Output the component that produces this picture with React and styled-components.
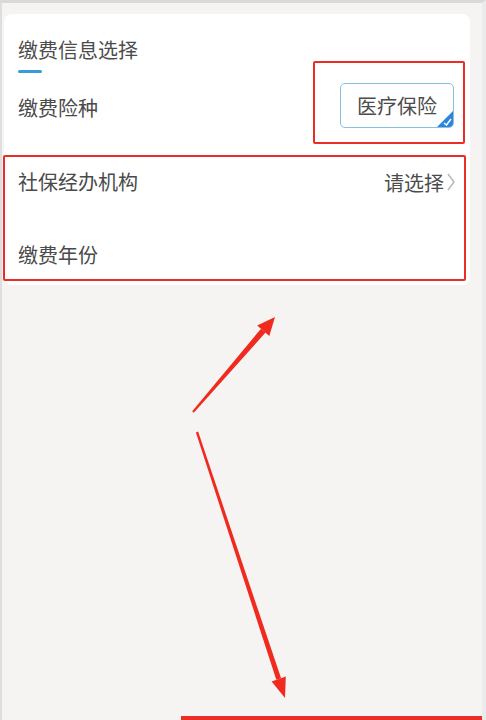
import React from 'react'
import styled, { createGlobalStyle } from 'styled-components'

const GlobalStyle = createGlobalStyle`
  html, body {
    margin: 0;
    padding: 0;
    background: #f5f4f3;
  }
  body {
    font-family: "Noto Sans CJK SC", "Noto Sans", sans-serif;
  }
`

const Page = styled.div`
  position: relative;
  box-sizing: border-box;
  width: 486px;
  height: 720px;
  overflow: hidden;
  background: #f5f4f3;
  border-top: 3px solid #d9d9d9;
  border-left: 2px solid #dedede;
  border-right: 4px solid #ebebeb;
`

const Card = styled.div`
  position: relative;
  display: flex;
  flex-direction: column;
  margin: 11px 12px 0 2px;
  height: 271px;
  background: #ffffff;
  border-radius: 8px;
`

const TitleBlock = styled.div`
  display: flex;
  flex-direction: column;
  padding: 22px 0 0 14px;
  height: 66px;
  box-sizing: border-box;
`

const Title = styled.div`
  font-size: 20px;
  line-height: 28px;
  color: #4c4c4c;
`

const Underline = styled.div`
  margin-top: 6px;
  width: 24px;
  height: 3px;
  border-radius: 2px;
  background: #3b9bd8;
`

const Row = styled.div`
  display: flex;
  align-items: center;
  justify-content: space-between;
  box-sizing: border-box;
  height: ${props => props.h}px;
  margin-top: ${props => props.gap || 0}px;
  padding: 0 ${props => props.right || 14}px 0 14px;
`

const Label = styled.span`
  font-size: 20px;
  line-height: 28px;
  color: #4a4a4a;
`

const TypeButton = styled.div`
  position: relative;
  display: flex;
  align-items: center;
  justify-content: center;
  box-sizing: border-box;
  width: 114px;
  height: 45px;
  margin-bottom: 5px;
  border: 1.5px solid #86c1df;
  border-radius: 5px;
  background: #ffffff;
  font-size: 20px;
  color: #4c4c4c;
  overflow: hidden;
`

const Corner = styled.svg`
  position: absolute;
  right: 0;
  bottom: 0;
`

const Select = styled.div`
  display: flex;
  align-items: center;
  gap: 2px;
  font-size: 20px;
  color: #4c4c4c;
`

const Frame = styled.div`
  position: absolute;
  left: ${props => props.x}px;
  top: ${props => props.y}px;
  width: ${props => props.w}px;
  height: ${props => props.h}px;
  box-sizing: border-box;
  border: 2px solid #ea2d25;
  border-radius: 2px;
  pointer-events: none;
`

const BottomMark = styled.div`
  position: absolute;
  left: 179px;
  right: 0;
  bottom: 0;
  height: 4px;
  background: #ea2d25;
`

const Arrows = styled.svg`
  position: absolute;
  left: -2px;
  top: -3px;
  pointer-events: none;
`

function Chevron () {
  return (
    <svg width='10' height='20' viewBox='0 0 10 20'>
      <polyline points='2,2 8,10 2,18' fill='none' stroke='#b8b8b8' strokeWidth='1.5' />
    </svg>
  )
}

export default function App () {
  return (
    <>
      <GlobalStyle />
      <Page>
        <Card>
          <TitleBlock>
            <Title>缴费信息选择</Title>
            <Underline />
          </TitleBlock>

          <Row h={56} right={16}>
            <Label>缴费险种</Label>
            <TypeButton>
              医疗保险
              <Corner width='16' height='16' viewBox='0 0 16 16'>
                <polygon points='16,0 16,16 0,16' fill='#2d86d9' />
                <polyline points='7,12 9.5,14 14,8' fill='none' stroke='#ffffff' strokeWidth='1.5' />
              </Corner>
            </TypeButton>
          </Row>

          <Row h={60} gap={16}>
            <Label>社保经办机构</Label>
            <Select>
              请选择
              <Chevron />
            </Select>
          </Row>

          <Row h={60} gap={13}>
            <Label>缴费年份</Label>
          </Row>

          <Frame x={309} y={47} w={152} h={83} />
          <Frame x={-1} y={141} w={463} h={126} />
        </Card>

        <Arrows width='486' height='720' viewBox='0 0 486 720'>
          <polygon points='192.2,411.3 193.8,412.7 265.5,332.6 261,328.7' fill='#f02a1e' />
          <polygon points='275,317 269.3,335.9 257.2,325.4' fill='#f02a1e' />
          <polygon points='195.9,432.4 198.1,431.6 281.1,678.2 276.3,679.8' fill='#f02a1e' />
          <polygon points='285,698 285.8,676.6 271.6,681.4' fill='#f02a1e' />
        </Arrows>

        <BottomMark />
      </Page>
    </>
  )
}
